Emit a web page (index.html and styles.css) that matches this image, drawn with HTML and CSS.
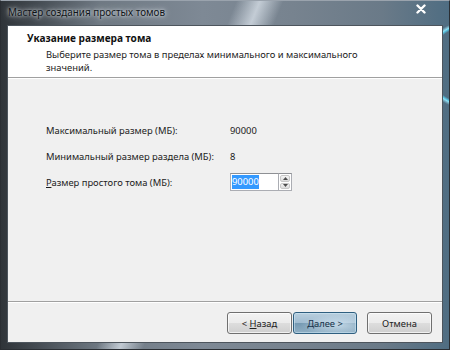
FILE: index.html
```html
<!DOCTYPE html>
<html lang="ru">
<head>
    <meta charset="UTF-8">
    <title>Мастер создания простых томов</title>
    <link rel="stylesheet" href="styles.css">
</head>
<body>
    <div class="window">
        <div class="titlebar">
            <span class="title">Мастер создания простых томов</span>
            <svg class="close" width="10" height="10" viewBox="0 0 10 10">
                <path d="M1.5 1.5 L8.5 8.5 M8.5 1.5 L1.5 8.5" stroke="#fff" stroke-width="2.4" stroke-linecap="round"/>
            </svg>
        </div>
        <div class="client">
            <div class="header">
                <div class="header-title">Указание размера тома</div>
                <div class="header-sub">Выберите размер тома в пределах минимального и максимального значений.</div>
            </div>
            <div class="content">
                <div class="form">
                    <span>Максимальный размер (МБ):</span>
                    <span>90000</span>
                    <span>Минимальный размер раздела (МБ):</span>
                    <span>8</span>
                    <span><u>Р</u>азмер простого тома (МБ):</span>
                    <div class="spin">
                        <div class="spin-field"><span class="selected">90000</span></div>
                        <div class="spin-buttons">
                            <div class="spin-btn">
                                <svg width="5" height="3" viewBox="0 0 5 3"><path d="M0 3 L2.5 0 L5 3 Z" fill="#4d4d4d"/></svg>
                            </div>
                            <div class="spin-btn">
                                <svg width="5" height="3" viewBox="0 0 5 3"><path d="M0 0 L5 0 L2.5 3 Z" fill="#4d4d4d"/></svg>
                            </div>
                        </div>
                    </div>
                </div>
            </div>
            <div class="footer">
                <button class="btn">&lt; <u>Н</u>азад</button>
                <button class="btn btn-default"><u>Д</u>алее &gt;</button>
                <button class="btn btn-cancel">Отмена</button>
            </div>
        </div>
    </div>
</body>
</html>
```

FILE: styles.css
```css
/* Page */
body {
    margin: 0;
    font-family: "Noto Sans", "Open Sans", sans-serif;
    font-size: 9.4px;
    color: #1c1c1c;
}

/* Aero glass frame */
.window {
    width: 450px;
    height: 350px;
    box-sizing: border-box;
    padding: 0 6px 6px 6px;
    display: flex;
    flex-direction: column;
    border: 1px solid #2a2e33;
    border-top-color: #9aa3ad;
    background:
        radial-gradient(circle at 466px 64px, transparent 38px, #57c4e2 40px, #8fdcf0 41px, transparent 44px),
        linear-gradient(112deg, rgba(255, 255, 255, 0) 40%, rgba(220, 228, 236, 0.75) 44%, rgba(255, 255, 255, 0) 48%),
        linear-gradient(90deg, #2f3439 0%, #444b52 8%, #6f7983 22%, #7e8995 45%, #77838f 65%, #6a7a88 85%, #4f6d82 100%);
}

.titlebar {
    height: 24px;
    flex-shrink: 0;
    display: flex;
    align-items: center;
    justify-content: space-between;
    padding: 0 17px 2px 1px;
    box-sizing: border-box;
}

.title {
    font-size: 9.9px;
    color: #101418;
    text-shadow: 0 0 6px rgba(235, 240, 245, 0.9), 0 0 3px rgba(235, 240, 245, 0.8);
}

.close {
    margin-bottom: 7px;
}

/* Client area */
.client {
    flex: 1;
    display: flex;
    flex-direction: column;
    border: 1px solid #4d555d;
    background-color: #f0f0f0;
}

.header {
    height: 52px;
    background-color: #fff;
    border-bottom: 1px solid #a0a0a0;
    box-shadow: 0 1px 0 #fff;
    padding: 5px 0 0 19px;
    box-sizing: border-box;
}

.header-title {
    font-weight: bold;
    font-size: 10.1px;
    line-height: 15px;
    color: #111;
}

.header-sub {
    max-width: 330px;
    padding: 2px 0 0 19px;
    line-height: 13px;
}

/* Size fields */
.content {
    flex: 1;
    padding: 43px 0 0 38px;
}

.form {
    display: grid;
    grid-template-columns: 184px auto;
    grid-auto-rows: 18px;
    row-gap: 8px;
    align-items: center;
}

.spin {
    display: flex;
    width: 62px;
    height: 18px;
}

.spin-field {
    flex: 1;
    border: 1px solid #abadb3;
    border-top-color: #8e9094;
    border-right: none;
    background-color: #fff;
    display: flex;
    align-items: center;
    padding-left: 1px;
}

.selected {
    background-color: #3399ff;
    color: #fff;
    line-height: 14px;
}

.spin-buttons {
    width: 14px;
    display: flex;
    flex-direction: column;
    border: 1px solid #abadb3;
    border-top-color: #8e9094;
    background-color: #fff;
    padding: 1px;
    box-sizing: border-box;
    gap: 1px;
}

.spin-btn {
    flex: 1;
    display: flex;
    align-items: center;
    justify-content: center;
    border: 1px solid #c8c8c8;
    border-radius: 2px;
    background: linear-gradient(#f4f4f4, #dcdcdc);
}

/* Wizard buttons */
.footer {
    height: 41px;
    border-top: 1px solid #a0a0a0;
    box-shadow: inset 0 1px 0 #fff;
    display: flex;
    justify-content: flex-end;
    align-items: flex-start;
    padding: 10px 10px 0 0;
    box-sizing: border-box;
    gap: 1px;
}

.btn {
    width: 65px;
    height: 22px;
    font-family: "Noto Sans", sans-serif;
    font-size: 9.4px;
    color: #222;
    border: 1px solid #707070;
    border-radius: 3px;
    background: linear-gradient(#f3f3f3 0%, #ebebeb 50%, #dddddd 51%, #cfcfcf 100%);
    box-shadow: inset 0 0 0 1px rgba(255, 255, 255, 0.7);
    padding: 0;
}

.btn-default {
    width: 64px;
    border-color: #2f5f80;
    background:
        radial-gradient(ellipse at 70% 60%, rgba(225, 240, 250, 0.7), rgba(225, 240, 250, 0) 60%),
        linear-gradient(#b9cfde 0%, #9fbbd0 50%, #7599b2 51%, #90afc4 100%);
    box-shadow: inset 0 0 0 1px rgba(210, 235, 250, 0.5);
    color: #16324a;
}

.btn-cancel {
    margin-left: 9px;
}
```
